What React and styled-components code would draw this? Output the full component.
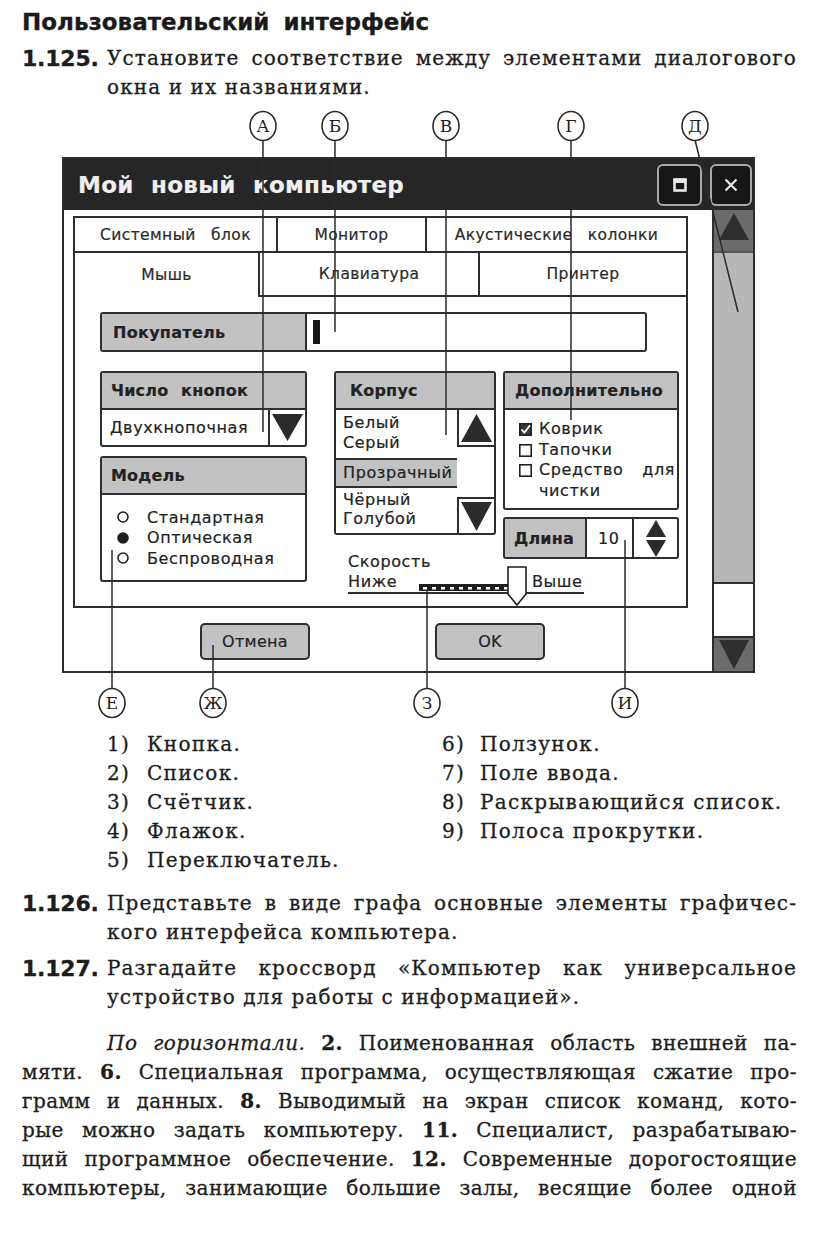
import React from "react";
import styled, { createGlobalStyle } from "styled-components";

const LINE = "#2e2e2e";
const GRAY = "#c2c2c2";
const INK = "#1d1d1d";

const GlobalStyle = createGlobalStyle`
  html, body { margin: 0; padding: 0; background: #fff; }
  body { width: 816px; min-height: 1259px; overflow: hidden; }
  * { box-sizing: border-box; }
`;

const Page = styled.div`
  width: 816px;
  height: 1259px;
  padding-top: 7px;
  background: #fff;
  color: ${INK};
  font-family: "DejaVu Serif", "Liberation Serif", serif;
  -webkit-text-stroke: 0.3px currentColor;
`;

const Heading = styled.h1`
  margin: 0 0 0 22px;
  font-family: "DejaVu Sans", "Liberation Sans", sans-serif;
  font-weight: 700;
  font-size: 23px;
  line-height: 30px;
  word-spacing: 6px;
  color: #1a1a1a;
`;

const Task = styled.section`
  display: grid;
  grid-template-columns: 85px 690px;
  margin: ${(p) => p.$mt}px 0 0 22px;
`;

const TaskNo = styled.div`
  font-family: "DejaVu Sans", "Liberation Sans", sans-serif;
  font-weight: 700;
  font-size: 22px;
  line-height: 29px;
  letter-spacing: -0.2px;
`;

const Text = styled.div`
  font-size: 20px;
  line-height: 29px;
  letter-spacing: ${(p) => p.$ls ?? 1.1}px;
`;

const Line = styled.div`
  text-align: ${(p) => (p.$last ? "left" : "justify")};
  text-align-last: ${(p) => (p.$last ? "left" : "justify")};
  padding-left: ${(p) => p.$indent || 0}px;
`;

const Paragraph = styled(Text)`
  width: 775px;
  margin: ${(p) => p.$mt}px 0 0 22px;
`;

/* ---------- figure ---------- */

const Figure = styled.div`
  position: relative;
  height: 628px;
  padding: 55px 0 0 62px;
`;

const Overlay = styled.svg`
  position: absolute;
  left: 0;
  top: 0;
  width: 816px;
  height: 628px;
  overflow: visible;
  pointer-events: none;
`;

const Win = styled.div`
  width: 693px;
  height: 516px;
  border: 2px solid ${LINE};
  display: flex;
  flex-direction: column;
  background: #fff;
  font-family: "DejaVu Sans", "Liberation Sans", sans-serif;
  color: #222;
  -webkit-text-stroke: 0.2px currentColor;
`;

const TitleBar = styled.div`
  height: 51px;
  flex: none;
  background: #262626;
  display: flex;
  align-items: center;
  padding: 0 1px 0 14px;
`;

const Title = styled.div`
  flex: 1;
  color: #f0f0f0;
  font-weight: 700;
  font-size: 23px;
  word-spacing: 9px;
  letter-spacing: 0.3px;
`;

const WinBtn = styled.div`
  width: ${(p) => p.$w}px;
  height: 42px;
  margin-left: ${(p) => p.$ml || 0}px;
  border: 2px solid #a9a9a9;
  border-radius: 6px;
  background: #171717;
  display: flex;
  align-items: center;
  justify-content: center;
`;

const WinBody = styled.div`
  flex: 1;
  display: flex;
`;

const Content = styled.div`
  flex: 1;
  padding: 6px 0 0 9px;
`;

const TabRow = styled.div`
  display: flex;
  width: 615px;
  height: ${(p) => p.$h}px;
`;

const Tab = styled.div`
  width: ${(p) => p.$w}px;
  display: flex;
  align-items: center;
  justify-content: center;
  border-left: 2px solid ${LINE};
  border-top: ${(p) => (p.$top ? `2px solid ${LINE}` : "none")};
  border-bottom: ${(p) => (p.$bottom ? `2px solid ${LINE}` : "none")};
  border-right: ${(p) => (p.$right ? `2px solid ${LINE}` : "none")};
  font-size: 15.5px;
  letter-spacing: 0.4px;
  word-spacing: 10px;
  color: #2a2a2a;
  white-space: nowrap;
`;

const Panel = styled.div`
  width: 615px;
  height: 311px;
  border: 2px solid ${LINE};
  border-top: none;
  padding: 15px 0 0 25px;
`;

const Field = styled.div`
  display: flex;
  width: 547px;
  height: 40px;
  border: 2px solid ${LINE};
  border-radius: 3px;
  overflow: hidden;
`;

const FieldLabel = styled.div`
  width: 205px;
  background: ${GRAY};
  border-right: 2px solid ${LINE};
  display: flex;
  align-items: center;
  padding-left: 11px;
  font-weight: 700;
  font-size: 16px;
  letter-spacing: 0.3px;
`;

const Cursor = styled.span`
  width: 7px;
  height: 24px;
  align-self: center;
  margin-left: 6px;
  background: #151515;
`;

const Columns = styled.div`
  display: flex;
  align-items: flex-start;
  margin-top: 19px;
`;

const Col = styled.div`
  width: ${(p) => p.$w}px;
  margin-left: ${(p) => p.$ml || 0}px;
  display: flex;
  flex-direction: column;
`;

const Group = styled.div`
  height: ${(p) => p.$h}px;
  margin-top: ${(p) => p.$mt || 0}px;
  border: 2px solid ${LINE};
  border-radius: 3px;
  overflow: hidden;
  display: flex;
  flex-direction: column;
  background: #fff;
`;

const GroupHead = styled.div`
  height: 37px;
  flex: none;
  background: ${GRAY};
  border-bottom: 2px solid ${LINE};
  display: flex;
  align-items: center;
  padding-left: ${(p) => p.$pl || 9}px;
  font-weight: 700;
  font-size: 16px;
  letter-spacing: 0.2px;
  word-spacing: 7px;
  white-space: nowrap;
`;

const UiText = styled.span`
  font-size: 16px;
  letter-spacing: 0.6px;
`;

const Combo = styled.div`
  flex: 1;
  display: flex;
`;

const ComboValue = styled.div`
  flex: 1;
  display: flex;
  align-items: center;
  padding-left: 8px;
`;

const ComboBtn = styled.div`
  width: 37px;
  border-left: 2px solid ${LINE};
  display: flex;
  align-items: center;
  justify-content: center;
`;

const OptionList = styled.div`
  padding: 12px 0 0 15px;
  display: flex;
  flex-direction: column;
`;

const Option = styled.div`
  display: flex;
  align-items: center;
  gap: 18px;
  height: 20.5px;
`;

const ListWrap = styled.div`
  flex: 1;
  display: flex;
`;

const ListItems = styled.div`
  width: 121px;
  display: flex;
  flex-direction: column;
`;

const ListBlock = styled.div`
  height: ${(p) => p.$h}px;
  padding: ${(p) => p.$pt}px 0 0 7px;
  background: ${(p) => (p.$sel ? GRAY : "#fff")};
  border-top: ${(p) => (p.$sel ? `2px solid ${LINE}` : "none")};
  border-bottom: ${(p) => (p.$sel ? `2px solid ${LINE}` : "none")};
  display: flex;
  flex-direction: column;
  justify-content: ${(p) => (p.$sel ? "center" : "flex-start")};
  line-height: ${(p) => p.$lh || 20}px;
`;

const ListScroll = styled.div`
  flex: 1;
  display: flex;
  flex-direction: column;
  justify-content: space-between;
`;

const ListBtn = styled.div`
  height: ${(p) => p.$h}px;
  border-left: 2px solid ${LINE};
  border-bottom: ${(p) => (p.$up ? `2px solid ${LINE}` : "none")};
  border-top: ${(p) => (p.$up ? "none" : `2px solid ${LINE}`)};
  display: flex;
  align-items: center;
  justify-content: center;
`;

const CheckList = styled.div`
  padding: 9px 0 0 14px;
  display: flex;
  flex-direction: column;
`;

const CheckItem = styled.div`
  display: flex;
  align-items: flex-start;
  gap: 7px;
  line-height: 20.5px;
`;

const CheckText = styled(UiText)`
  width: 136px;
  text-align: justify;
  word-spacing: 4px;
`;

const CheckBox = styled.svg`
  flex: none;
  margin-top: 4px;
`;

const Spinner = styled.div`
  margin-top: 7px;
  height: 42px;
  display: flex;
  border: 2px solid ${LINE};
  border-radius: 3px;
  overflow: hidden;
`;

const SpinLabel = styled.div`
  width: 82px;
  background: ${GRAY};
  border-right: 2px solid ${LINE};
  display: flex;
  align-items: center;
  padding-left: 9px;
  font-weight: 700;
  font-size: 16px;
  letter-spacing: 0.2px;
`;

const SpinValue = styled.div`
  width: 47px;
  border-right: 2px solid ${LINE};
  display: flex;
  align-items: center;
  padding-left: 11px;
`;

const SpinBtns = styled.div`
  flex: 1;
  display: flex;
  flex-direction: column;
  align-items: center;
  justify-content: center;
  gap: 3px;
`;

const Speed = styled.div`
  margin: 17px 0 0 14px;
  width: 236px;
`;

const SpeedLabel = styled.div`
  line-height: 20px;
`;

const SpeedRow = styled.div`
  display: grid;
  grid-template-columns: 70px 114px 1fr;
  grid-template-rows: 20px;
  align-items: end;
  height: 22px;
  border-bottom: 2px solid ${LINE};
  line-height: 20px;
`;

const SliderArt = styled.svg`
  align-self: end;
  margin-bottom: -14px;
  overflow: visible;
`;

const Actions = styled.div`
  display: flex;
  gap: 125px;
  margin: 15px 0 0 127px;
`;

const Btn = styled.div`
  width: 110px;
  height: 37px;
  border: 2px solid ${LINE};
  border-radius: 5px;
  background: ${GRAY};
  display: flex;
  align-items: center;
  justify-content: center;
  font-size: 16px;
  letter-spacing: 0.3px;
`;

const ScrollBar = styled.div`
  width: 41px;
  border-left: 2px solid ${LINE};
  display: flex;
  flex-direction: column;
`;

const ScrollArrow = styled.div`
  height: ${(p) => p.$h}px;
  flex: none;
  background: #6b6b6b;
  display: flex;
  justify-content: center;
  align-items: ${(p) => (p.$up ? "flex-start" : "flex-end")};
  padding: ${(p) => (p.$up ? "3px 0 0" : "0 0 2px")};
  border-top: ${(p) => (p.$up ? "none" : `2px solid ${LINE}`)};
  border-bottom: ${(p) => (p.$up ? `2px solid #555` : "none")};
`;

const ScrollTrack = styled.div`
  height: 329px;
  flex: none;
  background: #b7b7b7;
`;

const ScrollGap = styled.div`
  flex: 1;
  background: #fff;
  border-top: 2px solid ${LINE};
`;

/* ---------- answers ---------- */

const Answers = styled.div`
  display: grid;
  grid-template-columns: 335px 1fr;
  grid-auto-flow: column;
  grid-template-rows: repeat(5, 29px);
  margin-left: 107px;
  font-size: 20px;
  line-height: 29px;
  letter-spacing: 1.3px;
`;

const Answer = styled.div`
  display: flex;
`;

const AnsNo = styled.span`
  width: ${(p) => p.$w}px;
  flex: none;
`;

/* ---------- small drawings ---------- */

const Tri = ({ w, h, dir = "down", color = "#2b2b2b" }) => (
  <svg width={w} height={h} viewBox={`0 0 ${w} ${h}`}>
    <polygon
      points={dir === "down" ? `0,0 ${w},0 ${w / 2},${h}` : `${w / 2},0 ${w},${h} 0,${h}`}
      fill={color}
    />
  </svg>
);

const Radio = ({ on }) => (
  <svg width="12" height="12" viewBox="0 0 12 12">
    <circle cx="6" cy="6" r="5" fill={on ? "#1f1f1f" : "#fff"} stroke="#1f1f1f" strokeWidth="1.6" />
  </svg>
);

const Check = ({ on }) => (
  <CheckBox width="13" height="13" viewBox="0 0 13 13">
    <rect x="0.8" y="0.8" width="11.4" height="11.4" fill={on ? "#3a3a3a" : "#fff"} stroke="#222" strokeWidth="1.6" />
    {on && <path d="M2.5 6.5 L5.3 9.6 L11 2.4" fill="none" stroke="#fff" strokeWidth="1.8" />}
  </CheckBox>
);

const topMarks = [
  ["А", 263, [[263, 38, 263, 330]]],
  ["Б", 335, [[335, 38, 335, 230]]],
  ["В", 446, [[446, 38, 446, 333]]],
  ["Г", 571, [[571, 38, 571, 318]]],
  ["Д", 695, [[695, 38, 738, 210]]],
];
const bottomMarks = [
  ["Е", 112, [[112, 448, 112, 587]]],
  ["Ж", 213, [[213, 543, 213, 587]]],
  ["З", 427, [[427, 488, 427, 587]]],
  ["И", 625, [[625, 438, 625, 587]]],
];

const Mark = ({ label, x, y }) => (
  <g>
    <ellipse cx={x} cy={y} rx="13" ry="14.5" fill="#fff" stroke="#2a2a2a" strokeWidth="1.6" />
    <text
      x={x}
      y={y + 6}
      textAnchor="middle"
      fontFamily="'DejaVu Serif', serif"
      fontSize="17"
      fill="#1d1d1d"
    >
      {label}
    </text>
  </g>
);

export default function App() {
  return (
    <>
      <GlobalStyle />
      <Page>
        <Heading>Пользовательский интерфейс</Heading>

        <Task $mt={7}>
          <TaskNo>1.125.</TaskNo>
          <Text>
            <Line>Установите соответствие между элементами диалогового</Line>
            <Line $last>окна и их названиями.</Line>
          </Text>
        </Task>

        <Figure>
          <Win>
            <TitleBar>
              <Title>Мой новый компьютер</Title>
              <WinBtn $w={45}>
                <svg width="16" height="16" viewBox="0 0 16 16">
                  <rect x="2.5" y="2.5" width="11" height="11" fill="none" stroke="#e8e8e8" strokeWidth="2.6" />
                  <rect x="1.5" y="1.5" width="13" height="4.5" fill="#e8e8e8" />
                </svg>
              </WinBtn>
              <WinBtn $w={42} $ml={8}>
                <svg width="16" height="16" viewBox="0 0 16 16">
                  <path d="M2.5 2.5 L13.5 13.5 M13.5 2.5 L2.5 13.5" stroke="#e8e8e8" strokeWidth="2.2" />
                </svg>
              </WinBtn>
            </TitleBar>

            <WinBody>
              <Content>
                <TabRow $h={37}>
                  <Tab $w={203} $top $bottom>Системный блок</Tab>
                  <Tab $w={149} $top $bottom>Монитор</Tab>
                  <Tab $w={263} $top $bottom $right>Акустические колонки</Tab>
                </TabRow>
                <TabRow $h={44}>
                  <Tab $w={185}>Мышь</Tab>
                  <Tab $w={220} $bottom>Клавиатура</Tab>
                  <Tab $w={210} $bottom $right>Принтер</Tab>
                </TabRow>

                <Panel>
                  <Field>
                    <FieldLabel>Покупатель</FieldLabel>
                    <Cursor />
                  </Field>

                  <Columns>
                    <Col $w={207}>
                      <Group $h={76}>
                        <GroupHead $pl={9}>Число кнопок</GroupHead>
                        <Combo>
                          <ComboValue>
                            <UiText>Двухкнопочная</UiText>
                          </ComboValue>
                          <ComboBtn>
                            <Tri w={31} h={27} dir="down" />
                          </ComboBtn>
                        </Combo>
                      </Group>
                      <Group $h={126} $mt={9}>
                        <GroupHead $pl={9}>Модель</GroupHead>
                        <OptionList>
                          <Option>
                            <Radio />
                            <UiText>Стандартная</UiText>
                          </Option>
                          <Option>
                            <Radio on />
                            <UiText>Оптическая</UiText>
                          </Option>
                          <Option>
                            <Radio />
                            <UiText>Беспроводная</UiText>
                          </Option>
                        </OptionList>
                      </Group>
                    </Col>

                    <Col $w={162} $ml={27}>
                      <Group $h={164}>
                        <GroupHead $pl={14}>Корпус</GroupHead>
                        <ListWrap>
                          <ListItems>
                            <ListBlock $h={48} $pt={3}>
                              <UiText>Белый</UiText>
                              <UiText>Серый</UiText>
                            </ListBlock>
                            <ListBlock $h={30} $pt={0} $sel>
                              <UiText>Прозрачный</UiText>
                            </ListBlock>
                            <ListBlock $h={45} $pt={2} $lh={19}>
                              <UiText>Чёрный</UiText>
                              <UiText>Голубой</UiText>
                            </ListBlock>
                          </ListItems>
                          <ListScroll>
                            <ListBtn $h={37} $up>
                              <Tri w={31} h={28} dir="up" />
                            </ListBtn>
                            <ListBtn $h={36}>
                              <Tri w={31} h={29} dir="down" />
                            </ListBtn>
                          </ListScroll>
                        </ListWrap>
                      </Group>

                      <Speed>
                        <SpeedLabel>
                          <UiText>Скорость</UiText>
                        </SpeedLabel>
                        <SpeedRow>
                          <UiText>Ниже</UiText>
                          <SliderArt width="110" height="40" viewBox="0 0 110 40">
                            <rect x="1" y="18" width="94" height="7" fill="#1e1e1e" />
                            {Array.from({ length: 10 }).map((_, i) => (
                              <rect key={i} x={5 + i * 9} y="21" width="4" height="2.5" fill="#fff" />
                            ))}
                            <path d="M90 1 L108 1 L108 28 L99 39 L90 28 Z" fill="#fff" stroke="#1e1e1e" strokeWidth="1.6" />
                          </SliderArt>
                          <UiText>Выше</UiText>
                        </SpeedRow>
                      </Speed>
                    </Col>

                    <Col $w={176} $ml={7}>
                      <Group $h={139}>
                        <GroupHead $pl={10}>Дополнительно</GroupHead>
                        <CheckList>
                          <CheckItem>
                            <Check on />
                            <CheckText>Коврик</CheckText>
                          </CheckItem>
                          <CheckItem>
                            <Check />
                            <CheckText>Тапочки</CheckText>
                          </CheckItem>
                          <CheckItem>
                            <Check />
                            <CheckText>Средство для чистки</CheckText>
                          </CheckItem>
                        </CheckList>
                      </Group>
                      <Spinner>
                        <SpinLabel>Длина</SpinLabel>
                        <SpinValue>
                          <UiText>10</UiText>
                        </SpinValue>
                        <SpinBtns>
                          <Tri w={20} h={17} dir="up" />
                          <Tri w={20} h={17} dir="down" />
                        </SpinBtns>
                      </Spinner>
                    </Col>
                  </Columns>
                </Panel>

                <Actions>
                  <Btn>Отмена</Btn>
                  <Btn>OK</Btn>
                </Actions>
              </Content>

              <ScrollBar>
                <ScrollArrow $h={43} $up>
                  <Tri w={30} h={27} dir="up" color="#2f2f2f" />
                </ScrollArrow>
                <ScrollTrack />
                <ScrollGap />
                <ScrollArrow $h={35}>
                  <Tri w={30} h={29} dir="down" color="#2f2f2f" />
                </ScrollArrow>
              </ScrollBar>
            </WinBody>
          </Win>

          <Overlay viewBox="0 0 816 628">
            {[...topMarks, ...bottomMarks].map(([, , lines], i) =>
              lines.map(([x1, y1, x2, y2], j) => (
                <line key={`${i}-${j}`} x1={x1} y1={y1} x2={x2} y2={y2} stroke="#2a2a2a" strokeWidth="1.5" />
              ))
            )}
            {topMarks.map(([l, x]) => (
              <Mark key={l} label={l} x={x} y={24} />
            ))}
            {bottomMarks.map(([l, x]) => (
              <Mark key={l} label={l} x={x} y={601} />
            ))}
          </Overlay>
        </Figure>

        <Answers>
          <Answer><AnsNo $w={40}>1)</AnsNo>Кнопка.</Answer>
          <Answer><AnsNo $w={40}>2)</AnsNo>Список.</Answer>
          <Answer><AnsNo $w={40}>3)</AnsNo>Счётчик.</Answer>
          <Answer><AnsNo $w={40}>4)</AnsNo>Флажок.</Answer>
          <Answer><AnsNo $w={40}>5)</AnsNo>Переключатель.</Answer>
          <Answer><AnsNo $w={38}>6)</AnsNo>Ползунок.</Answer>
          <Answer><AnsNo $w={38}>7)</AnsNo>Поле ввода.</Answer>
          <Answer><AnsNo $w={38}>8)</AnsNo>Раскрывающийся список.</Answer>
          <Answer><AnsNo $w={38}>9)</AnsNo>Полоса прокрутки.</Answer>
        </Answers>

        <Task $mt={13.5}>
          <TaskNo>1.126.</TaskNo>
          <Text>
            <Line>Представьте в виде графа основные элементы графичес-</Line>
            <Line $last>кого интерфейса компьютера.</Line>
          </Text>
        </Task>

        <Task $mt={7.5}>
          <TaskNo>1.127.</TaskNo>
          <Text>
            <Line>Разгадайте кроссворд «Компьютер как универсальное</Line>
            <Line $last>устройство для работы с информацией».</Line>
          </Text>
        </Task>

        <Paragraph $mt={16.5} $ls={0.45}>
          <Line $indent={85}>
            <i>По горизонтали.</i> <b>2.</b> Поименованная область внешней па-
          </Line>
          <Line>
            мяти. <b>6.</b> Специальная программа, осуществляющая сжатие про-
          </Line>
          <Line>
            грамм и данных. <b>8.</b> Выводимый на экран список команд, кото-
          </Line>
          <Line>
            рые можно задать компьютеру. <b>11.</b> Специалист, разрабатываю-
          </Line>
          <Line>
            щий программное обеспечение. <b>12.</b> Современные дорогостоящие
          </Line>
          <Line>
            компьютеры, занимающие большие залы, весящие более одной
          </Line>
        </Paragraph>
      </Page>
    </>
  );
}
